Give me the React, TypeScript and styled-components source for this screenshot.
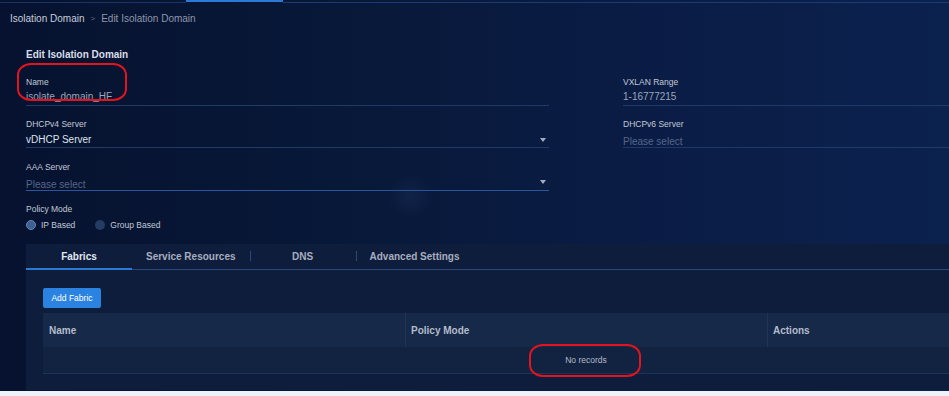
import styled, { createGlobalStyle } from "styled-components";

const GlobalStyle = createGlobalStyle`
  html, body {
    margin: 0;
    padding: 0;
    overflow: hidden;
    background: #edf2f8;
    font-family: "Liberation Sans", Arial, sans-serif;
  }
  * { box-sizing: border-box; }
`;

type FieldProps = {
  label: string;
  value?: string;
  placeholder?: string;
  tone?: "muted" | "bright";
  select?: boolean;
  line?: "dim" | "bright";
  circled?: boolean;
};

function Field({ label, value, placeholder, tone = "muted", select, line = "dim", circled }: FieldProps) {
  return (
    <FieldBox>
      <FieldLabel>{label}</FieldLabel>
      <ValueRow $line={line}>
        {value ? <Value $tone={tone}>{value}</Value> : <Placeholder>{placeholder}</Placeholder>}
        {select ? <Caret /> : null}
      </ValueRow>
      {circled ? <NameMark /> : null}
    </FieldBox>
  );
}

const tabs = ["Fabrics", "Service Resources", "DNS", "Advanced Settings"];

export default function App() {
  return (
    <>
      <GlobalStyle />
      <Page>
        <TopStrip>
          <StripSpacer />
          <StripActive />
          <StripRest />
        </TopStrip>
        <Breadcrumb>
          <Crumb>Isolation Domain</Crumb>
          <CrumbSep>&gt;</CrumbSep>
          <CrumbCurrent>Edit Isolation Domain</CrumbCurrent>
        </Breadcrumb>
        <Content>
          <Title>Edit Isolation Domain</Title>
          <FormGrid>
            <Field label="Name" value="isolate_domain_HF" circled />
            <Field label="VXLAN Range" value="1-16777215" />
            <Field label="DHCPv4 Server" value="vDHCP Server" tone="bright" select />
            <Field label="DHCPv6 Server" placeholder="Please select" />
            <Field label="AAA Server" placeholder="Please select" select line="bright" />
            <div />
            <PolicyBox>
              <FieldLabel>Policy Mode</FieldLabel>
              <RadioRow>
                <RadioItem>
                  <RadioDot $checked />
                  IP Based
                </RadioItem>
                <RadioItem>
                  <RadioDot />
                  Group Based
                </RadioItem>
              </RadioRow>
            </PolicyBox>
          </FormGrid>

          <Panel>
            <TabBar>
              {tabs.map((t, i) => (
                <Tab key={t} $active={i === 0} $divider={i > 1}>
                  {t}
                </Tab>
              ))}
            </TabBar>
            <PanelBody>
              <AddButton type="button">Add Fabric</AddButton>
              <Table>
                <HeadRow>
                  <HeadCell>Name</HeadCell>
                  <HeadCell $divider>Policy Mode</HeadCell>
                  <HeadCell $divider>Actions</HeadCell>
                </HeadRow>
                <EmptyRow>
                  <EmptyText>
                    No records
                    <EmptyMark />
                  </EmptyText>
                </EmptyRow>
              </Table>
            </PanelBody>
          </Panel>
        </Content>
      </Page>
    </>
  );
}

const Page = styled.div`
  width: 949px;
  height: 391px;
  overflow: hidden;
  background:
    radial-gradient(circle at 410px 196px, rgba(90, 120, 170, 0.1), transparent 22px),
    linear-gradient(90deg, #06122f 0%, #081838 35%, #0a1c44 65%, #0b214e 100%);
`;

const TopStrip = styled.div`
  display: flex;
  height: 3px;
`;

const StripSpacer = styled.div`
  width: 186px;
  border-bottom: 1px solid #17356a;
`;

const StripActive = styled.div`
  width: 97px;
  height: 2px;
  background: #2b7bd6;
`;

const StripRest = styled.div`
  flex: 1;
  border-bottom: 1px solid #1b3c72;
`;

const Breadcrumb = styled.div`
  display: flex;
  align-items: center;
  gap: 6px;
  margin-top: 8px;
  padding-left: 10px;
  height: 14px;
  font-size: 10px;
`;

const Crumb = styled.span`
  color: #c6cdd9;
`;

const CrumbSep = styled.span`
  color: #5f6c86;
  font-size: 8px;
`;

const CrumbCurrent = styled.span`
  color: #8d97ab;
`;

const Content = styled.div`
  padding-left: 26px;
  padding-top: 23px;
`;

const Title = styled.div`
  font-size: 10px;
  font-weight: 700;
  line-height: 14px;
  color: #d9dee7;
`;

const FormGrid = styled.div`
  display: grid;
  grid-template-columns: 523px 523px;
  column-gap: 74px;
  row-gap: 12.5px;
  margin-top: 13.5px;
`;

const FieldBox = styled.div`
  position: relative;
  display: flex;
  flex-direction: column;
`;

const FieldLabel = styled.div`
  font-size: 8.5px;
  line-height: 12px;
  color: #c2c9d5;
`;

const ValueRow = styled.div<{ $line: "dim" | "bright" }>`
  display: flex;
  align-items: center;
  justify-content: space-between;
  margin-top: 2px;
  height: 16px;
  border-bottom: 1px solid ${({ $line }) => ($line === "bright" ? "#2a579b" : "#1d3a68")};
  padding-right: 3px;
`;

const Value = styled.span<{ $tone: "muted" | "bright" }>`
  font-size: 10px;
  line-height: 14px;
  color: ${({ $tone }) => ($tone === "bright" ? "#dde3ec" : "#9ba6b9")};
`;

const Placeholder = styled.span`
  font-size: 10px;
  line-height: 14px;
  margin-top: 5px;
  color: #56668a;
`;

const Caret = styled.span`
  width: 0;
  height: 0;
  border-left: 3.5px solid transparent;
  border-right: 3.5px solid transparent;
  border-top: 4px solid #a3acbf;
`;

const NameMark = styled.span`
  position: absolute;
  left: -9px;
  top: -13px;
  width: 110px;
  height: 38px;
  border: 2px solid #e3141e;
  border-radius: 14px / 12px;
  pointer-events: none;
`;

const PolicyBox = styled.div`
  display: flex;
  flex-direction: column;
`;

const RadioRow = styled.div`
  display: flex;
  gap: 20px;
  margin-top: 4px;
  height: 12px;
  align-items: center;
`;

const RadioItem = styled.label`
  display: flex;
  align-items: center;
  gap: 5px;
  font-size: 8.5px;
  color: #c2c9d5;
`;

const RadioDot = styled.span<{ $checked?: boolean }>`
  width: 10px;
  height: 10px;
  border-radius: 50%;
  background: ${({ $checked }) => ($checked ? "#3e6193" : "#243b64")};
  border: ${({ $checked }) => ($checked ? "1.5px solid #6886b3" : "none")};
`;

const Panel = styled.div`
  margin-top: 13px;
  width: 1120px;
  background: #0f1d3d;
`;

const TabBar = styled.div`
  display: flex;
  height: 26px;
  border-bottom: 1px solid #26487c;
`;

const Tab = styled.div<{ $active?: boolean; $divider?: boolean }>`
  position: relative;
  min-width: 106px;
  padding: 0 14px;
  height: 26px;
  margin-bottom: -1px;
  display: flex;
  align-items: center;
  justify-content: center;
  font-size: 10px;
  font-weight: 700;
  color: ${({ $active }) => ($active ? "#e3e8f0" : "#a6aebe")};
  border-bottom: 2px solid ${({ $active }) => ($active ? "#2b7bd6" : "transparent")};

  &::before {
    content: "";
    display: ${({ $divider }) => ($divider ? "block" : "none")};
    position: absolute;
    left: 0;
    top: 7px;
    height: 10px;
    width: 1px;
    background: #2b4a7a;
  }
`;

const PanelBody = styled.div`
  padding: 18px 0 16px 17px;
`;

const AddButton = styled.button`
  display: block;
  width: 58px;
  height: 20px;
  padding: 0;
  border: none;
  border-radius: 2px;
  background: #2a83e0;
  color: #ffffff;
  font-family: inherit;
  font-size: 8.5px;
`;

const Table = styled.div`
  margin-top: 5px;
  width: 1086px;
`;

const HeadRow = styled.div`
  display: grid;
  grid-template-columns: repeat(3, 362px);
  height: 34px;
  background: #162949;
`;

const HeadCell = styled.div<{ $divider?: boolean }>`
  display: flex;
  align-items: center;
  padding-left: 5px;
  font-size: 10px;
  font-weight: 700;
  color: #b4bcca;
  border-left: 1px solid ${({ $divider }) => ($divider ? "#1f3457" : "transparent")};
`;

const EmptyRow = styled.div`
  height: 27px;
  display: flex;
  align-items: center;
  justify-content: center;
  background: #122341;
  border-bottom: 1px solid #1c3459;
`;

const EmptyText = styled.span`
  position: relative;
  font-size: 8.5px;
  color: #b3bac8;
`;

const EmptyMark = styled.span`
  position: absolute;
  left: -36px;
  top: -11px;
  width: 112px;
  height: 33px;
  border: 2px solid #e3141e;
  border-radius: 14px / 12px;
  pointer-events: none;
`;
